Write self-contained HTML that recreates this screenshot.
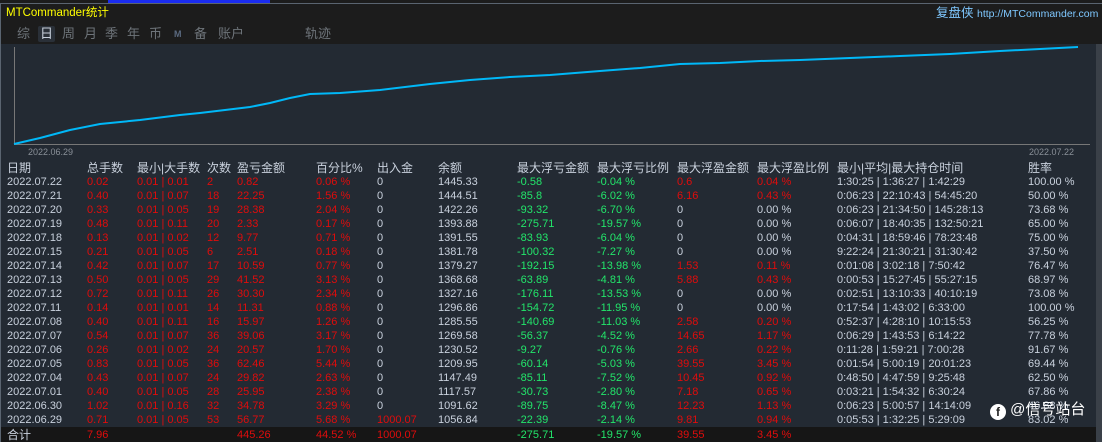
<!DOCTYPE html><html><head><meta charset="utf-8"><style>
body{margin:0;width:1102px;height:442px;background:#232a33;overflow:hidden;font-family:"Liberation Sans","Noto Sans CJK SC",sans-serif;position:relative}
.top{position:absolute;left:0;top:0;width:1102px;height:44px;background:#1c1c1c}
.a{position:absolute;white-space:nowrap;font-size:11px;line-height:14px}
.w{color:#c9d1dd}.r{color:#e00c0c}.g{color:#22e56a}
.t{position:absolute;top:26px;color:#6e747a;font-size:13px;line-height:16px;white-space:nowrap}
</style></head><body>
<div class="top"></div>
<div style="position:absolute;left:108px;top:0;width:162px;height:3px;background:#1a2cf0"></div>
<div style="position:absolute;left:0;top:3px;width:1102px;height:1px;background:#5a6470"></div>
<div style="position:absolute;left:0;top:4px;width:1px;height:438px;background:#5a6470"></div>
<div class="a" style="left:6px;top:6px;color:#ffff00;font-size:11.5px">MTCommander统计</div>
<div class="a" style="left:936px;top:6px;color:#7fc8ff;font-size:12.5px">复盘侠 <span style="font-size:10.5px">http://MTCommander.com</span></div>
<div class="t" style="left:17px">综</div>
<div class="t" style="left:38px;color:#c9d1dd;background:#2a3038;padding:0 2px;border-radius:2px">日</div>
<div class="t" style="left:62px">周</div>
<div class="t" style="left:84px">月</div>
<div class="t" style="left:105px">季</div>
<div class="t" style="left:127px">年</div>
<div class="t" style="left:149px">币</div>
<div class="t" style="left:174px;font-size:9px;color:#5b6a80;font-weight:bold">M</div>
<div class="t" style="left:194px">备</div>
<div class="t" style="left:218px">账户</div>
<div class="t" style="left:305px">轨迹</div>
<div style="position:absolute;left:1096px;top:44px;width:6px;height:398px;background:#3a4048"></div>
<svg style="position:absolute;left:0;top:0" width="1102" height="442">
<line x1="14.5" y1="47" x2="14.5" y2="145" stroke="#777" stroke-width="1"/>
<line x1="14" y1="144.5" x2="1090" y2="144.5" stroke="#777" stroke-width="1"/>
<polyline fill="none" stroke="#00b8f8" stroke-width="2" points="14,144 40,138 70,130 100,124 140,120 180,115 200,113 250,107 270,103 290,98 310,94 340,93 380,90 430,84 470,80 510,77 550,75 600,71 640,68 680,64 720,63 760,61 800,60 850,58 900,56 950,54 1000,51 1040,49 1078,47"/>
</svg>
<div class="a" style="left:28px;top:145px;color:#8a9098;font-size:9px">2022.06.29</div>
<div class="a" style="left:1029px;top:145px;color:#8a9098;font-size:9px">2022.07.22</div>
<div class="a w" style="left:7px;top:161px;font-size:12px">日期</div>
<div class="a w" style="left:87px;top:161px;font-size:12px">总手数</div>
<div class="a w" style="left:137px;top:161px;font-size:12px">最小|大手数</div>
<div class="a w" style="left:207px;top:161px;font-size:12px">次数</div>
<div class="a w" style="left:237px;top:161px;font-size:12px">盈亏金额</div>
<div class="a w" style="left:316px;top:161px;font-size:12px">百分比%</div>
<div class="a w" style="left:377px;top:161px;font-size:12px">出入金</div>
<div class="a w" style="left:438px;top:161px;font-size:12px">余额</div>
<div class="a w" style="left:517px;top:161px;font-size:12px">最大浮亏金额</div>
<div class="a w" style="left:597px;top:161px;font-size:12px">最大浮亏比例</div>
<div class="a w" style="left:677px;top:161px;font-size:12px">最大浮盈金额</div>
<div class="a w" style="left:757px;top:161px;font-size:12px">最大浮盈比例</div>
<div class="a w" style="left:837px;top:161px;font-size:12px">最小|平均|最大持仓时间</div>
<div class="a w" style="left:1028px;top:161px;font-size:12px">胜率</div>
<div id="rows"></div>
<div style="position:absolute;left:1px;top:427px;width:1095px;height:15px;background:#161616"></div>
<div class="a w" style="left:7px;top:428px;font-size:12px">合计</div>
<div class="a r" style="left:87px;top:428px">7.96</div>
<div class="a r" style="left:237px;top:428px">445.26</div>
<div class="a r" style="left:316px;top:428px">44.52 %</div>
<div class="a r" style="left:377px;top:428px">1000.07</div>
<div class="a g" style="left:517px;top:428px">-275.71</div>
<div class="a g" style="left:597px;top:428px">-19.57 %</div>
<div class="a r" style="left:677px;top:428px">39.55</div>
<div class="a r" style="left:757px;top:428px">3.45 %</div>
<div class="a" style="left:990px;top:400px;color:#fff;font-size:15px;line-height:20px"><span style="display:inline-block;width:16px;height:16px;border-radius:50%;background:#fff;color:#222;font-size:12px;text-align:center;line-height:16px;font-weight:bold;vertical-align:-2px">f</span> @信号站台</div>
<script>
var d=[["2022.07.22","0.02","0.01 | 0.01","2","0.82","0.06 %","0","1445.33","-0.58","-0.04 %","0.6","0.04 %","1:30:25 | 1:36:27 | 1:42:29","100.00 %"],
["2022.07.21","0.40","0.01 | 0.07","18","22.25","1.56 %","0","1444.51","-85.8","-6.02 %","6.16","0.43 %","0:06:23 | 22:10:43 | 54:45:20","50.00 %"],
["2022.07.20","0.33","0.01 | 0.05","19","28.38","2.04 %","0","1422.26","-93.32","-6.70 %","0","0.00 %","0:06:23 | 21:34:50 | 145:28:13","73.68 %"],
["2022.07.19","0.48","0.01 | 0.11","20","2.33","0.17 %","0","1393.88","-275.71","-19.57 %","0","0.00 %","0:06:07 | 18:40:35 | 132:50:21","65.00 %"],
["2022.07.18","0.13","0.01 | 0.02","12","9.77","0.71 %","0","1391.55","-83.93","-6.04 %","0","0.00 %","0:04:31 | 18:59:46 | 78:23:48","75.00 %"],
["2022.07.15","0.21","0.01 | 0.05","6","2.51","0.18 %","0","1381.78","-100.32","-7.27 %","0","0.00 %","9:22:24 | 21:30:21 | 31:30:42","37.50 %"],
["2022.07.14","0.42","0.01 | 0.07","17","10.59","0.77 %","0","1379.27","-192.15","-13.98 %","1.53","0.11 %","0:01:08 | 3:02:18 | 7:50:42","76.47 %"],
["2022.07.13","0.50","0.01 | 0.05","29","41.52","3.13 %","0","1368.68","-63.89","-4.81 %","5.88","0.43 %","0:00:53 | 15:27:45 | 55:27:15","68.97 %"],
["2022.07.12","0.72","0.01 | 0.11","26","30.30","2.34 %","0","1327.16","-176.11","-13.53 %","0","0.00 %","0:02:51 | 13:10:33 | 40:10:19","73.08 %"],
["2022.07.11","0.14","0.01 | 0.01","14","11.31","0.88 %","0","1296.86","-154.72","-11.95 %","0","0.00 %","0:17:54 | 1:43:02 | 6:33:00","100.00 %"],
["2022.07.08","0.40","0.01 | 0.11","16","15.97","1.26 %","0","1285.55","-140.69","-11.03 %","2.58","0.20 %","0:52:37 | 4:28:10 | 10:15:53","56.25 %"],
["2022.07.07","0.54","0.01 | 0.07","36","39.06","3.17 %","0","1269.58","-56.37","-4.52 %","14.65","1.17 %","0:06:29 | 1:43:53 | 6:14:22","77.78 %"],
["2022.07.06","0.26","0.01 | 0.02","24","20.57","1.70 %","0","1230.52","-9.27","-0.76 %","2.66","0.22 %","0:11:28 | 1:59:21 | 7:00:28","91.67 %"],
["2022.07.05","0.83","0.01 | 0.05","36","62.46","5.44 %","0","1209.95","-60.14","-5.03 %","39.55","3.45 %","0:01:54 | 5:00:19 | 20:01:23","69.44 %"],
["2022.07.04","0.43","0.01 | 0.07","24","29.82","2.63 %","0","1147.49","-85.11","-7.52 %","10.45","0.92 %","0:48:50 | 4:47:59 | 9:25:48","62.50 %"],
["2022.07.01","0.40","0.01 | 0.05","28","25.95","2.38 %","0","1117.57","-30.73","-2.80 %","7.18","0.65 %","0:03:21 | 1:54:32 | 6:30:24","67.86 %"],
["2022.06.30","1.02","0.01 | 0.16","32","34.78","3.29 %","0","1091.62","-89.75","-8.47 %","12.23","1.13 %","0:06:23 | 5:00:57 | 14:14:09","46.88 %"],
["2022.06.29","0.71","0.01 | 0.05","53","56.77","5.68 %","1000.07","1056.84","-22.39","-2.14 %","9.81","0.94 %","0:05:53 | 1:32:25 | 5:29:09","83.02 %"]];
var xs=[7,87,137,207,237,316,377,438,517,597,677,757,837,1028],h="";
d.forEach(function(r,i){var y=175+i*14;r.forEach(function(v,j){var c="w";if(j>=1&&j<=5)c="r";if(j==6)c=v=="0"?"w":"r";if(j==8||j==9)c="g";if(j==10||j==11)c=(v=="0"||v=="0.00 %")?"w":"r";h+='<div class="a '+c+'" style="left:'+xs[j]+'px;top:'+y+'px">'+v+'</div>';});});
document.getElementById("rows").innerHTML=h;
</script>
</body></html>
